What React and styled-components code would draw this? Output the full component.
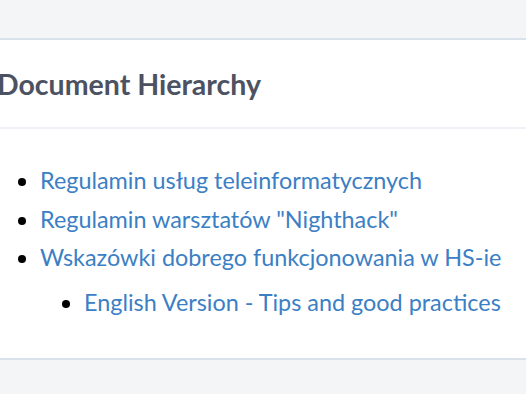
import React from "react";
import styled, { createGlobalStyle } from "styled-components";

const Global = createGlobalStyle`
  html, body { margin: 0; padding: 0; background: #f4f5f7; }
  body { font-family: Lato, "Noto Sans", sans-serif; overflow: hidden; }
`;

const Page = styled.div`
  width: 526px;
  height: 394px;
  padding-top: 38px;
  box-sizing: border-box;
  overflow: hidden;
`;

const Card = styled.section`
  margin-left: -22px;
  width: 580px;
  background: #fff;
  border-top: 2px solid #d9e2eb;
  border-bottom: 2px solid #d9e2eb;
`;

const Header = styled.h2`
  margin: 0;
  height: 87px;
  display: flex;
  align-items: center;
  padding-left: 19px;
  font-size: 28.5px;
  font-weight: 700;
  color: #4c5261;
  border-bottom: 2px solid #eef2f6;
`;

const Body = styled.div`
  padding: 32px 0 37px;
`;

const List = styled.ul`
  margin: ${(p) => (p.$nested ? "6px 0 0" : "0")};
  padding-left: ${(p) => (p.$nested ? "44px" : "62px")};
  list-style: disc;
  color: #000;
`;

const Item = styled.li`
  font-size: 23.4px;
  line-height: 38.5px;
`;

const Link = styled.a`
  color: #3b80c4;
  text-decoration: none;
`;

export default function App() {
  return (
    <>
      <Global />
      <Page>
        <Card>
          <Header>Document Hierarchy</Header>
          <Body>
            <List>
              <Item><Link href="#">Regulamin usług teleinformatycznych</Link></Item>
              <Item><Link href="#">Regulamin warsztatów "Nighthack"</Link></Item>
              <Item>
                <Link href="#">Wskazówki dobrego funkcjonowania w HS-ie</Link>
                <List $nested>
                  <Item><Link href="#">English Version - Tips and good practices</Link></Item>
                </List>
              </Item>
            </List>
          </Body>
        </Card>
      </Page>
    </>
  );
}
